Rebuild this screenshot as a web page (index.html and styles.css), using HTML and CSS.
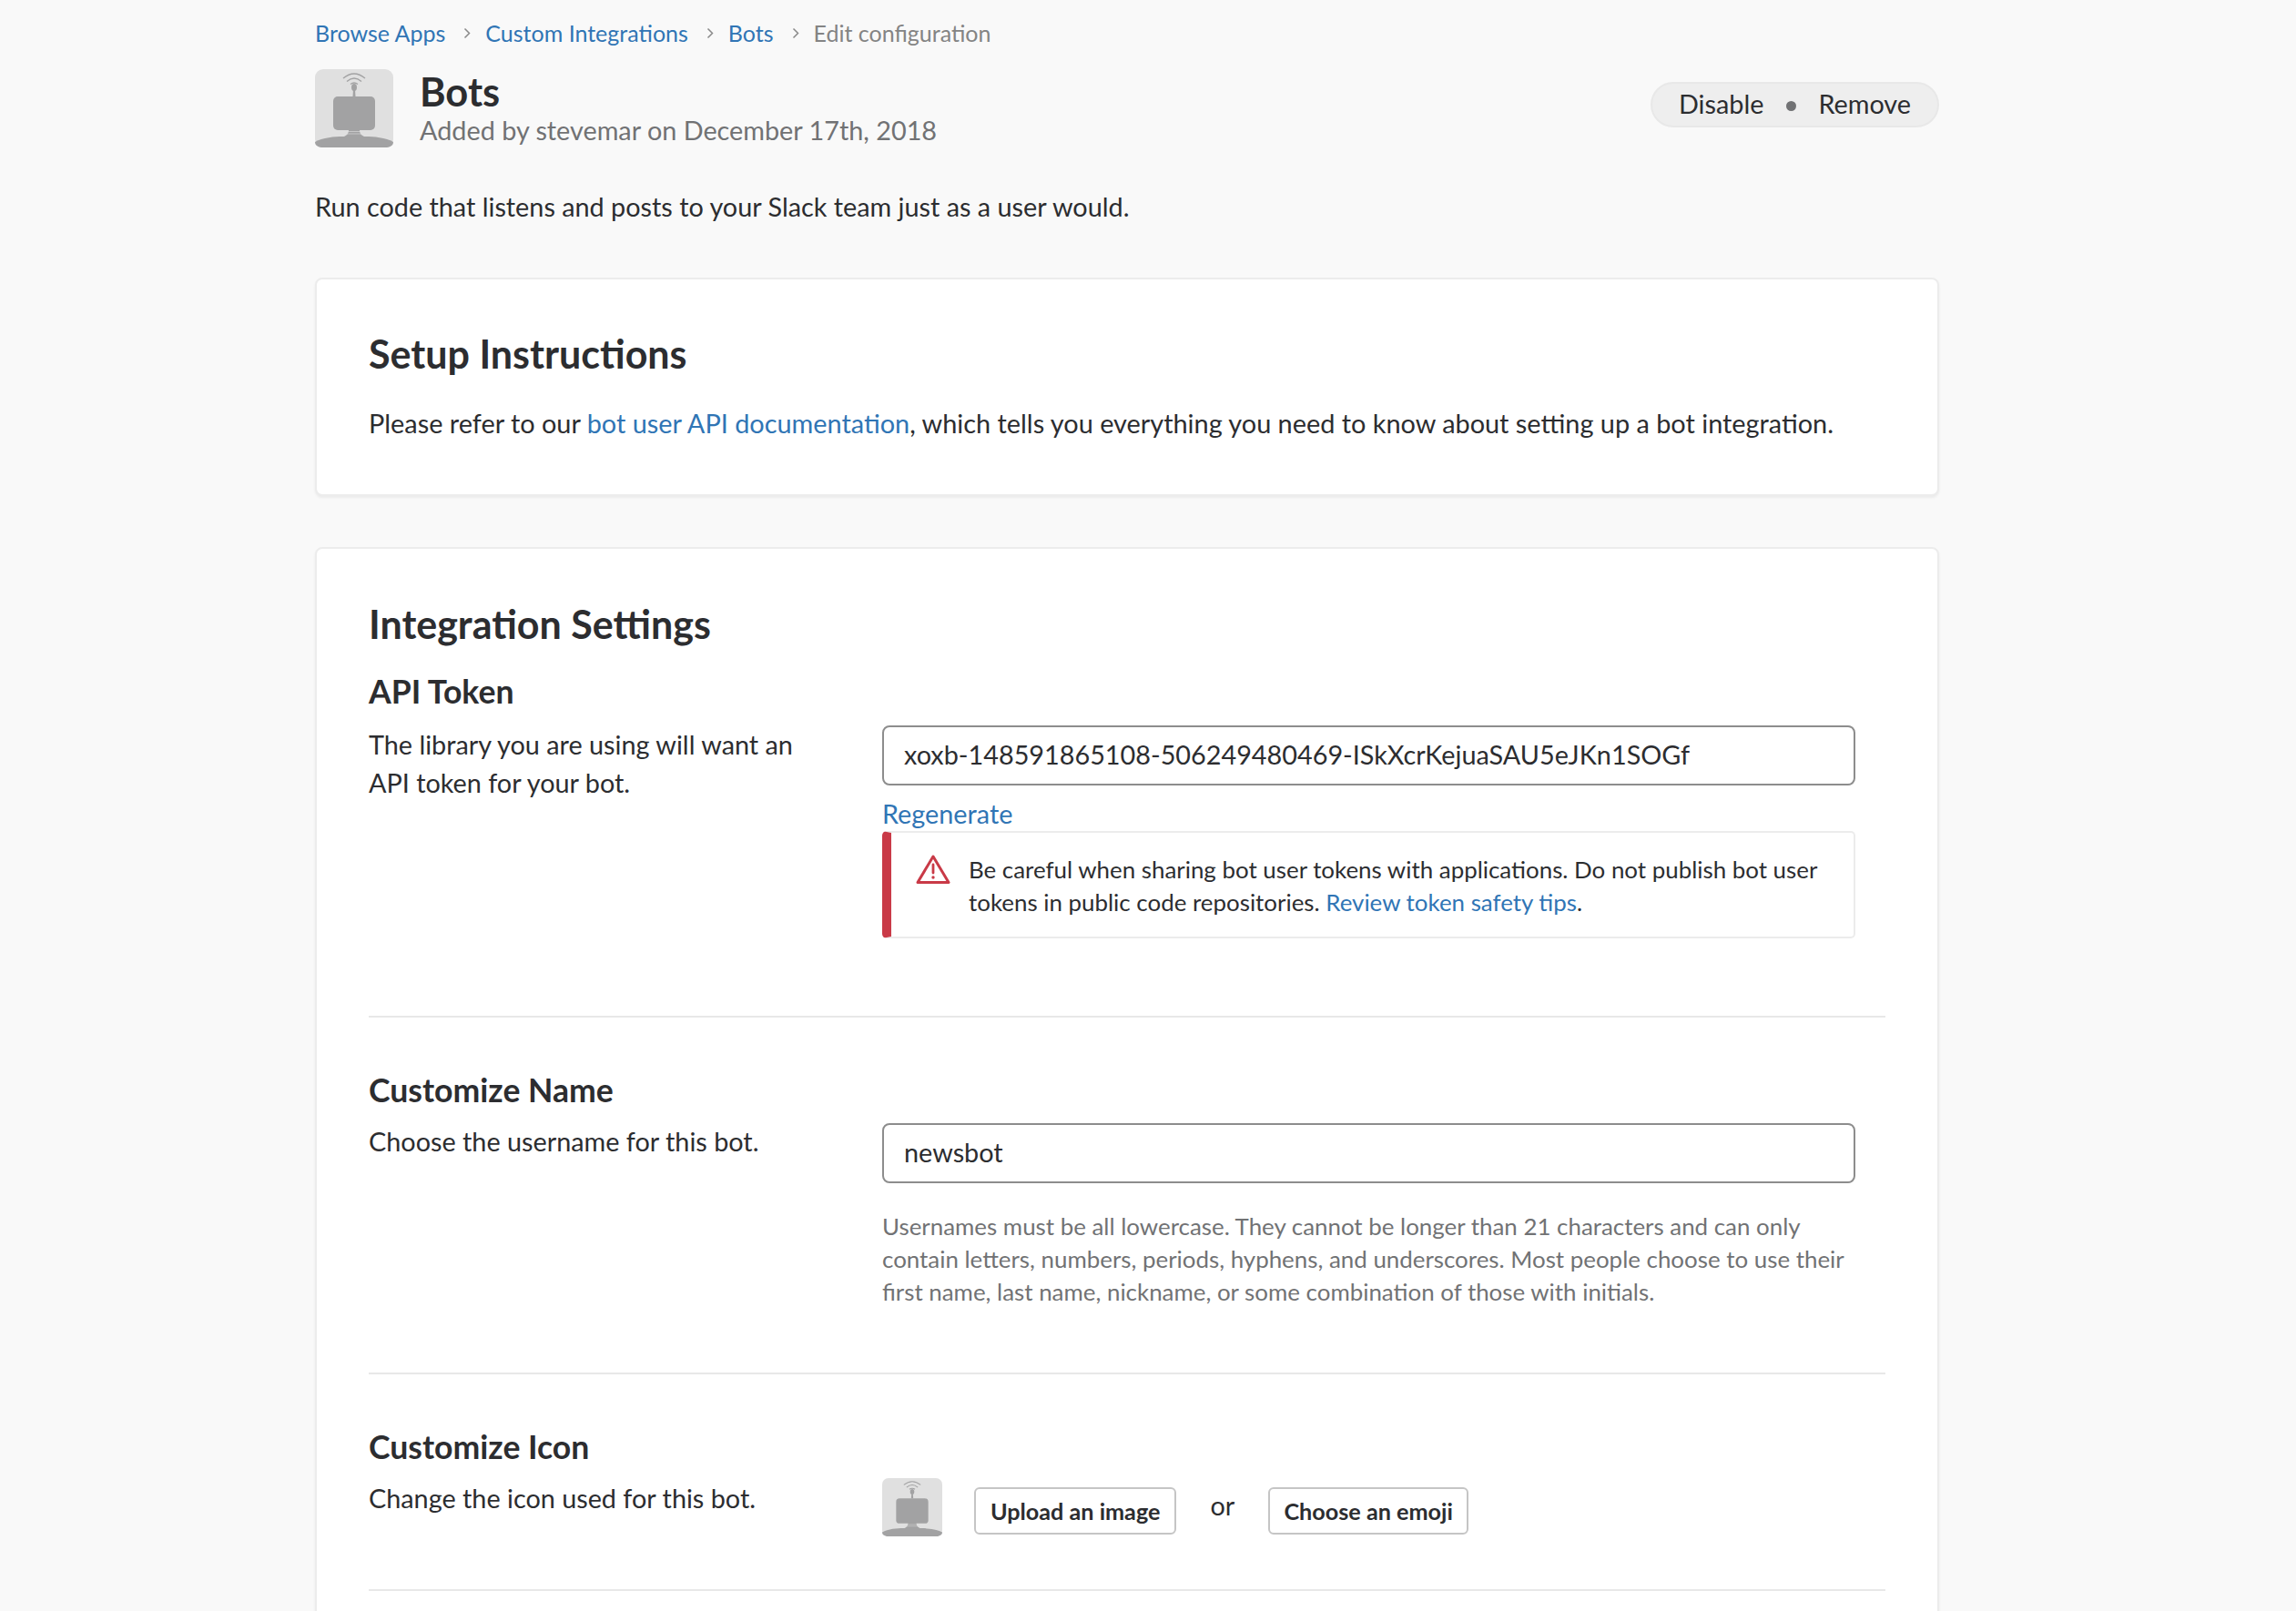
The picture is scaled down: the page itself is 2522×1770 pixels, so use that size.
FILE: index.html
```html
<!DOCTYPE html>
<html lang="en">
<head>
<meta charset="utf-8">
<title>Bots | Edit configuration</title>
<link rel="stylesheet" href="styles.css">
</head>
<body>
<svg class="defs" width="0" height="0" aria-hidden="true">
  <symbol id="bot" viewBox="0 0 86 86" preserveAspectRatio="none">
    <rect width="86" height="86" rx="9" fill="#e0e0e0"/>
    <path d="M0 80 C8 75 22 74 30 74 H56 C64 74 78 75 86 80 C86 84 82 86 77 86 H9 C4 86 0 84 0 80Z" fill="#a2a2a3"/>
    <path d="M32 74 C36 72 37 70 37 66 H49 C49 70 50 72 54 74Z" fill="#a2a2a3"/>
    <path d="M34 71H52M35 68.500H51" stroke="#e0e0e0" stroke-width=".6"/>
    <rect x="20" y="30" width="46" height="37" rx="5" fill="#a2a2a3"/>
    <path d="M41.500 30 L42 22 H44 L44.500 30Z" fill="#a2a2a3"/>
    <ellipse cx="43" cy="20" rx="3" ry="4" fill="#a2a2a3"/>
    <path d="M39 16.500Q43 13.500 47 16.500M35 13.500Q43 6.500 51 13.500M31 10Q43 0 55 10" fill="none" stroke="#a2a2a3" stroke-width="1.400"/>
  </symbol>
</svg>
<main class="page">
  <nav class="crumbs">
    <a href="#">Browse Apps</a><span class="sep"><svg viewBox="0 0 8 13" width="8" height="13"><path d="M1.500 1.500 6.500 6.500l-5 5" fill="none" stroke="#8a8a8a" stroke-width="1.500"/></svg></span>
    <a href="#">Custom Integrations</a><span class="sep"><svg viewBox="0 0 8 13" width="8" height="13"><path d="M1.500 1.500 6.500 6.500l-5 5" fill="none" stroke="#8a8a8a" stroke-width="1.500"/></svg></span>
    <a href="#">Bots</a><span class="sep"><svg viewBox="0 0 8 13" width="8" height="13"><path d="M1.500 1.500 6.500 6.500l-5 5" fill="none" stroke="#8a8a8a" stroke-width="1.500"/></svg></span>
    <span class="crumb-current">Edit configuration</span>
  </nav>
  <header class="head">
    <svg class="head-icon"><use href="#bot"/></svg>
    <div class="head-text">
      <h1>Bots</h1>
      <p class="added">Added by stevemar on December 17th, 2018</p>
    </div>
    <div class="pill">
      <span>Disable</span><i class="dot"></i><span>Remove</span>
    </div>
  </header>
  <p class="lede">Run code that listens and posts to your Slack team just as a user would.</p>

  <section class="card card-setup">
    <h2>Setup Instructions</h2>
    <p class="body-text">Please refer to our <a href="#">bot user API documentation</a>, which tells you everything you need to know about setting up a bot integration.</p>
  </section>

  <section class="card card-settings">
    <h2>Integration Settings</h2>
    <div class="row row-token">
      <div class="label-col">
        <h3>API Token</h3>
        <p class="body-text">The library you are using will want an API token for your bot.</p>
      </div>
      <div class="field-col field-token">
        <div class="input">xoxb-148591865108-506249480469-ISkXcrKejuaSAU5eJKn1SOGf</div>
        <a class="regen" href="#">Regenerate</a>
        <div class="alert">
          <svg class="alert-icon" viewBox="0 0 38 34" width="38" height="34"><path d="M19 3 36 31.500H2Z" fill="none" stroke="#c93a47" stroke-width="3" stroke-linejoin="round"/><path d="M19 12v9" stroke="#c93a47" stroke-width="2.800" stroke-linecap="round"/><circle cx="19" cy="26" r="1.700" fill="#c93a47"/></svg>
          <p>Be careful when sharing bot user tokens with applications. Do not publish bot user tokens in public code repositories. <a href="#">Review token safety tips</a>.</p>
        </div>
      </div>
    </div>
    <div class="row row-name">
      <div class="label-col">
        <h3>Customize Name</h3>
        <p class="body-text">Choose the username for this bot.</p>
      </div>
      <div class="field-col field-name">
        <div class="input">newsbot</div>
        <p class="hint">Usernames must be all lowercase. They cannot be longer than 21 characters and can only contain letters, numbers, periods, hyphens, and underscores. Most people choose to use their first name, last name, nickname, or some combination of those with initials.</p>
      </div>
    </div>
    <div class="row row-icon">
      <div class="label-col">
        <h3>Customize Icon</h3>
        <p class="body-text">Change the icon used for this bot.</p>
      </div>
      <div class="field-col field-icon">
        <svg class="small-icon"><use href="#bot"/></svg>
        <span class="btn">Upload an image</span>
        <span class="or">or</span>
        <span class="btn btn-emoji">Choose an emoji</span>
      </div>
    </div>
  </section>
</main>
</body>
</html>
```
FILE: styles.css
```css
* { box-sizing: border-box; }
html, body { margin: 0; height: 1770px; overflow: hidden; }
body {
  background: #f9f9f9;
  color: #2c2d30;
  font-family: Lato, "Liberation Sans", sans-serif;
  font-size: 28.8px;
  line-height: 42px;
  font-variant-ligatures: common-ligatures;
  text-rendering: optimizeLegibility;
}
a { color: #3075b5; text-decoration: none; }
h1, h2, h3, p { margin: 0; }
.defs { position: absolute; }
.page { width: 1784px; margin: 0 0 0 346px; padding-top: 16px; }

.crumbs { display: flex; align-items: center; font-size: 25px; line-height: 40px; height: 40px; }
.sep { width: 44px; display: flex; justify-content: center; padding-left: 4px; }
.crumb-current { color: #848484; }

.head { display: flex; align-items: flex-start; margin-top: 20px; }
.head-icon { width: 86px; height: 86px; flex: none; }
.head-text { margin-left: 29px; flex: 1; }
h1 { font-size: 43.5px; line-height: 50px; font-weight: 700; margin-top: -1px; }
.added { line-height: 38px; color: #717274; margin-top: -1px; }
.pill {
  display: flex; align-items: center; height: 50px; margin-top: 14px;
  padding: 0 29px 2px; background: #eeeeee; border: 2px solid #e8e8e8; border-radius: 25px;
}
.dot { width: 11px; height: 11px; border-radius: 50%; background: #717274; margin: 4px 24.500px 0; }
.lede { margin-top: 44px; }

.card {
  background: #fff; border: 2px solid #ececec; border-radius: 8px;
  box-shadow: 0 2px 3px rgba(0,0,0,.06);
  padding: 0 57px;
}
.card-setup { margin-top: 57px; height: 240px; padding-top: 57px; }
.card-settings { margin-top: 56px; height: 1400px; padding-top: 58px; }
h2 { font-size: 43px; line-height: 50px; font-weight: 700; }
h3 { font-size: 35.6px; line-height: 44px; font-weight: 700; }
.card-setup .body-text { margin-top: 30px; font-size: 28.86px; }

.row { display: grid; grid-template-columns: 564px 1069px; border-bottom: 2px solid #e8e8e8; }
.row-token { height: 407px; padding-top: 27px; }
.row-name { height: 392px; padding-top: 58px; }
.row-icon { height: 238px; padding-top: 58px; }
.label-col .body-text { width: 500px; margin-top: 15px; }
.row-name .label-col .body-text, .row-icon .label-col .body-text { margin-top: 13px; }
.field-col { min-width: 0; }
.field-token { padding-top: 59px; }
.field-name { padding-top: 58px; }

.input {
  height: 66px; border: 2px solid #8d8d8d; border-radius: 8px; background: #fff;
  padding: 0 22px; line-height: 60px;
}
.regen { display: block; margin-top: 10px; line-height: 42px; }
.alert {
  display: flex; align-items: flex-start; height: 118px; margin-top: -2px;
  border: 2px solid #ececec; border-left: 10px solid #c93a47; border-radius: 5px;
  padding: 22px 24px 0 27px; font-size: 25.9px; line-height: 36px;
}
.alert-icon { flex: none; margin: 1px 20px 0 0; }
.hint { margin-top: 29px; font-size: 25.9px; line-height: 36px; color: #717274; }

.field-icon { display: flex; align-items: flex-start; padding-top: 56px; }
.small-icon { width: 66px; height: 64px; flex: none; margin-right: 35px; }
.btn {
  display: inline-block; height: 52px; margin-top: 10px; padding: 0 16px; line-height: 48px;
  border: 2px solid #c5c5c5; border-radius: 6px; background: #fff;
  font-size: 25.2px; font-weight: 700;
}
.btn-emoji { padding: 0 15px; }
.or { width: 101px; text-align: center; margin-top: 9px; }
```
